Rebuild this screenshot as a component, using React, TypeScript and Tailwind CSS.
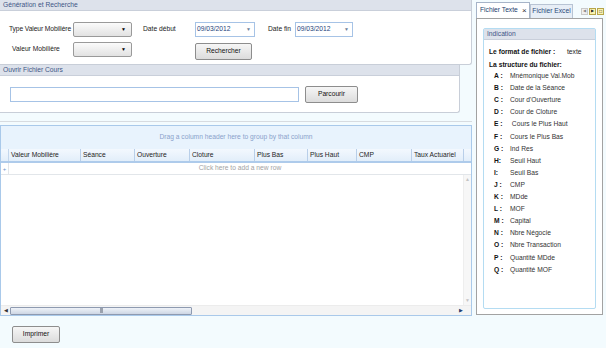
import { ReactNode } from "react";

const cols = [
  { label: "Valeur Mobilière", w: 72 },
  { label: "Séance", w: 54 },
  { label: "Ouverture", w: 55 },
  { label: "Cloture", w: 65 },
  { label: "Plus Bas", w: 53 },
  { label: "Plus Haut", w: 49 },
  { label: "CMP", w: 55 },
  { label: "Taux Actuariel", w: 52 },
];

const structure = [
  ["A :", "Mnémonique Val.Mob"],
  ["B :", "Date de la Séance"],
  ["C :", "Cour d'Ouverture"],
  ["D :", "Cour de Cloture"],
  ["E :", " Cours le Plus Haut"],
  ["F :", "Cours le Plus Bas"],
  ["G :", "Ind Res"],
  ["H:", "Seuil Haut"],
  ["I:", "Seuil Bas"],
  ["J :", "CMP"],
  ["K :", "MDde"],
  ["L :", "MOF"],
  ["M :", "Capital"],
  ["N :", "Nbre Négocie"],
  ["O :", "Nbre Transaction"],
  ["P :", "Quantité MDde"],
  ["Q :", "Quantité MOF"],
];

const Btn = ({ children, w }: { children: ReactNode; w: string }) => (
  <div
    className={`${w} h-[17px] flex items-center justify-center rounded-[2px] border border-[#8d8d8d] bg-gradient-to-b from-[#f6f6f6] to-[#dcdcdc] text-[#111]`}
  >
    {children}
  </div>
);

const Combo = () => (
  <div className="w-[59px] h-[15px] flex items-center justify-end pr-[5px] rounded-[2px] border border-[#9a9a9a] bg-gradient-to-b from-[#fbfbfb] to-[#e2e2e2]">
    <span className="text-[5px] leading-none text-black">▼</span>
  </div>
);

const DateBox = ({ w }: { w: string }) => (
  <div className={`${w} h-[15px] flex items-center justify-between pl-[1px] pr-[3px] border border-[#a6c3e6] bg-white`}>
    <span className="text-[#23417a]">09/03/2012</span>
    <span className="text-[5px] text-[#6d7f99]">▼</span>
  </div>
);

const Header = ({ children }: { children: ReactNode }) => (
  <div className="h-[11px] flex items-center pl-[3px] bg-[#dde2eb] border-b border-[#c9cfda] text-[#3d5686]">
    {children}
  </div>
);

export default function App() {
  return (
    <div
      className="w-[606px] h-[348px] flex bg-[#f3fbfe] text-[6.7px] leading-none text-[#222] whitespace-nowrap overflow-hidden"
      style={{ fontFamily: "'Liberation Sans', Arial, sans-serif" }}
    >
      {/* left side */}
      <div className="w-[472px] flex flex-col">
        {/* Génération et Recherche */}
        <div className="h-[65px] bg-white border-r border-b border-[#c8ced8] rounded-br-[3px]">
          <Header>Génération et Recherche</Header>
          <div className="flex items-center h-[15px] mt-[11px]">
            <span className="ml-[9px] w-[64px] tracking-[-0.1px]">Type Valeur Mobilière</span>
            <Combo />
            <span className="ml-[11px] w-[52px]">Date début</span>
            <DateBox w="w-[60px]" />
            <span className="ml-[13px] w-[27px]">Date fin</span>
            <DateBox w="w-[58px]" />
          </div>
          <div className="flex items-start h-[18px] mt-[5px]">
            <span className="ml-[12px] w-[61px] mt-[4px]">Valeur Mobilière</span>
            <Combo />
            <div className="ml-[63px] mt-[1px]">
              <Btn w="w-[57px]">Rechercher</Btn>
            </div>
          </div>
        </div>

        {/* Ouvrir Fichier Cours */}
        <div className="h-[48px] w-[460px] bg-white border-r border-b border-[#c8ced8] rounded-br-[3px]">
          <Header>Ouvrir Fichier Cours</Header>
          <div className="flex items-center mt-[10px]">
            <div className="ml-[10px] w-[289px] h-[15px] border border-[#a6c3e6] bg-white" />
            <div className="ml-[6px]">
              <Btn w="w-[53px]">Parcourir</Btn>
            </div>
          </div>
        </div>

        <div className="mt-[8px] h-[1px] bg-[#d7dbe0]" />

        {/* grid */}
        <div className="mt-[3px] h-[191px] flex flex-col border border-[#a9c9ea] bg-white">
          <div className="h-[23px] flex items-center justify-center bg-[#e8f3fd] text-[#8aa2cb]">
            Drag a column header here to group by that column
          </div>
          <div className="h-[14px] flex bg-gradient-to-b from-[#f3f8fe] to-[#e2eefa] border-b-2 border-[#aecbeb]">
            <div className="w-[8px] border-r border-[#c3d6ec]" />
            {cols.map((c) => (
              <div
                key={c.label}
                className="flex items-center pl-[2px] border-r border-[#b9cfe9] text-[#1d1d1d]"
                style={{ width: c.w }}
              >
                {c.label}
              </div>
            ))}
          </div>
          <div className="h-[12px] flex items-center border-b border-[#e2e6ea]">
            <div className="w-[8px] h-full flex items-center justify-center border-r border-[#e2e6ea] text-[#6f93c9] text-[6px]">+</div>
            <div className="flex-1 text-center text-[#a2a2a2]">Click here to add a new row</div>
          </div>
          <div className="flex-1 flex">
            <div className="flex-1" />
            <div className="w-[8px] flex flex-col items-center justify-between py-[2px] bg-[#f7f7f7] border-l border-[#eeeeee] text-[#c4c4c4] text-[5px]">
              <span>▲</span>
              <span>▼</span>
            </div>
          </div>
          <div className="h-[10px] flex items-center bg-[#f4f4f4] border-t border-[#ececec]">
            <span className="w-[9px] text-center text-[5px] text-[#333]">◀</span>
            <div className="w-[182px] h-[8px] flex items-center justify-center rounded-[1px] border border-[#8e9ab0] bg-gradient-to-b from-[#eef2f8] to-[#cdd6e4]">
              <div className="w-[3px] h-[5px] bg-[#9aa1ad]" />
            </div>
            <div className="flex-1" />
            <span className="w-[12px] text-[5px] text-[#253d6e]">▶</span>
          </div>
        </div>

        {/* bottom */}
        <div className="flex-1 pl-[12px] pt-[10px]">
          <Btn w="w-[48px]">Imprimer</Btn>
        </div>
      </div>

      {/* right side */}
      <div className="ml-[4px] w-[128px] flex flex-col">
        <div className="h-[18px] flex items-end">
          <div className="h-[16px] w-[54px] flex items-center pl-[3px] gap-[3px] bg-white border border-b-0 border-[#a6b4c8] text-[#22406e]">
            Fichier Texte
            <span className="w-[7px] h-[7px] flex items-center justify-center text-[8px] leading-none text-[#333]">×</span>
          </div>
          <div className="h-[14px] w-[43px] flex items-center justify-center bg-[#e7eef6] border border-b-0 border-[#b8c4d4] text-[#2a4a7a]">
            Fichier Excel
          </div>
          <div className="ml-[8px] flex gap-[1px] self-center mt-[4px]">
            <div className="w-[7px] h-[7px] flex items-center justify-center border border-[#c9c9c9] bg-[#f0f0f0] text-[4px] text-[#888]">◀</div>
            <div className="w-[7px] h-[7px] flex items-center justify-center border border-[#b7a64a] bg-[#fbf3b0] text-[4px] text-[#222]">▶</div>
            <div className="w-[7px] h-[7px] flex items-center justify-center border border-[#b7a64a] bg-[#fbf3b0] text-[5px] text-[#222]">□</div>
          </div>
        </div>
        <div className="h-[297px] w-[127px] bg-white border border-[#a2a2a2] px-[6px] pt-[9px] pb-[5px]">
          <div className="h-full border border-[#b4dcf2] rounded-[2px] bg-white">
            <Header>Indication</Header>
            <div className="flex items-center mt-[9px] ml-[5px]">
              <span className="font-bold w-[78px] text-[#111]">Le format de fichier :</span>
              <span>texte</span>
            </div>
            <div className="mt-[6px] ml-[5px] font-bold text-[#111]">La structure du fichier:</div>
            <div className="flex flex-col mt-[2px]">
              {structure.map(([k, v]) => (
                <div key={k} className="h-[12.1px] flex items-center ml-[10px]">
                  <span className="w-[16px] font-bold text-[#111]">{k}</span>
                  <span className="whitespace-pre text-[#333]">{v}</span>
                </div>
              ))}
            </div>
          </div>
        </div>
      </div>
    </div>
  );
}
